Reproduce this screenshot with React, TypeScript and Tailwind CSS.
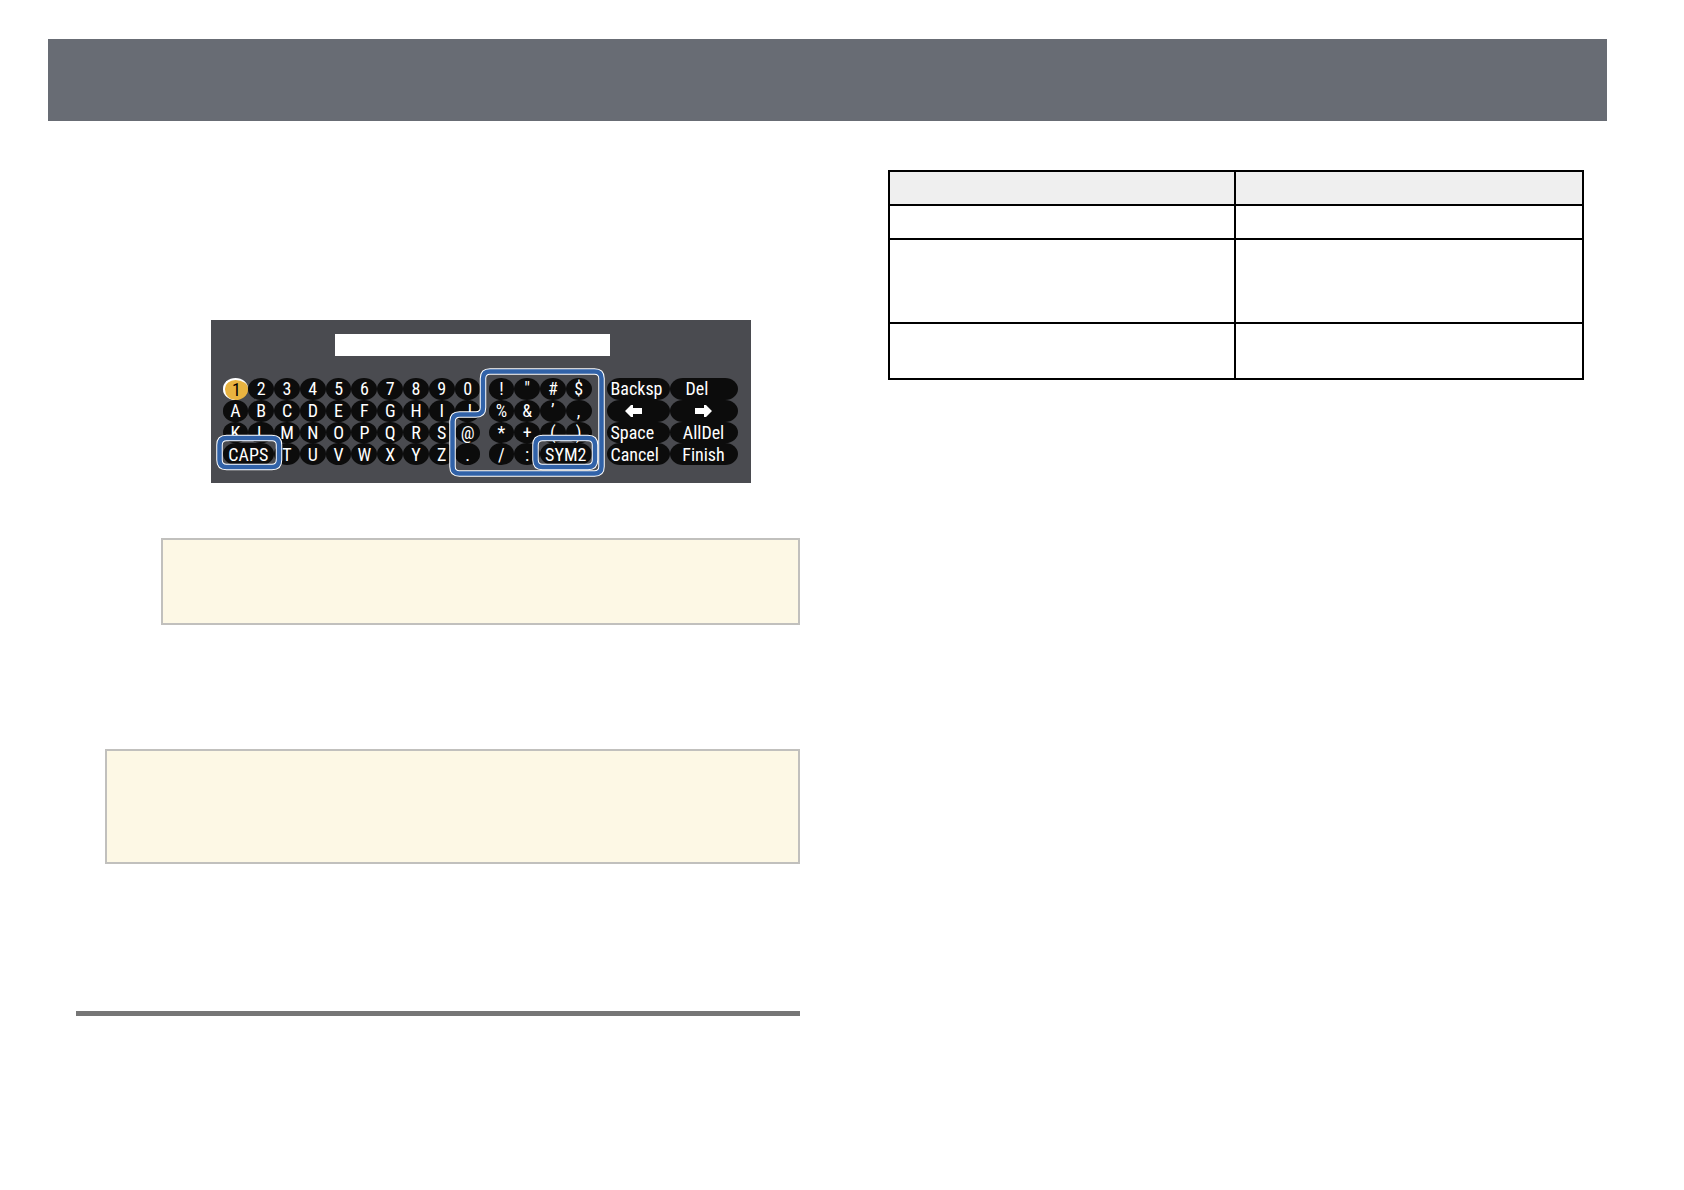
import { useState } from 'react'
import clsx from 'clsx'

type Key = {
  id: string
  label?: string
  span?: boolean
  className?: string
}

const letterKeys: Key[] = [
  ...'1234567890ABCDEFGHIJKLMNOPQRS@'.split('').map((c) => ({ id: c, label: c })),
  { id: 'caps', label: 'CAPS', span: true },
  ...'TUVWXYZ.'.split('').map((c) => ({ id: c, label: c })),
]

const symbolKeys: Key[] = [
  ...'!"#$%&\u2019,*+()/:'.split('').map((c) => ({ id: c, label: c })),
  { id: 'sym2', label: 'SYM2', span: true },
]

const commandKeys: Key[] = [
  { id: 'backspace', label: 'Backsp', className: 'justify-start pl-1' },
  { id: 'delete', label: 'Del', className: 'justify-start pl-4' },
  { id: 'left', className: 'justify-start pl-[18px]' },
  { id: 'right', className: 'justify-center' },
  { id: 'space', label: 'Space', className: 'justify-start pl-1' },
  { id: 'delete-all', label: 'AllDel', className: 'justify-center' },
  { id: 'cancel', label: 'Cancel', className: 'justify-start pl-1' },
  { id: 'finish', label: 'Finish', className: 'justify-center' },
]

const outlines = [
  'M279 51.5H383.5Q390.5 51.5 390.5 58.5V146.5Q390.5 153.5 383.5 153.5H248.5Q241.5 153.5 241.5 146.5V101.5Q241.5 94.5 248.5 94.5H265Q272 94.5 272 87.5V58.5Q272 51.5 279 51.5Z',
  'M15.5 118H61Q68 118 68 125V140Q68 147 61 147H15.5Q8.5 147 8.5 140V125Q8.5 118 15.5 118Z',
  'M331.5 118H377Q384 118 384 125V140Q384 147 377 147H331.5Q324.5 147 324.5 140V125Q324.5 118 331.5 118Z',
]

const Arrow = ({ flip }: { flip?: boolean }) => (
  <svg width="17" height="12" viewBox="0 0 17 12" fill="#fff" className={clsx(flip && 'rotate-180')}>
    <path d="M0 6L6 0H8V3H17V9H8V12H6Z" />
  </svg>
)

function SoftKeyboard() {
  const [selected, setSelected] = useState('1')
  const [text, setText] = useState('')

  const renderKey = (key: Key) => (
    <button
      key={key.id}
      type="button"
      aria-label={key.label ?? key.id}
      onClick={() => setSelected(key.id)}
      className={clsx(
        'flex min-w-0 items-center whitespace-nowrap rounded-[13px/11px] pt-px',
        key.span && 'col-span-2',
        key.className ?? 'justify-center',
        selected === key.id
          ? 'border-l-2 border-t-2 border-white bg-[#e9b340] text-black'
          : 'bg-[#0c0c0c] text-white'
      )}
    >
      {key.label ?? <Arrow flip={key.id === 'right'} />}
    </button>
  )

  return (
    <div className="relative mx-auto w-[540px] bg-[#4a4b50] pb-[18px] pl-3 pt-3.5">
      <input
        aria-label="Text"
        value={text}
        onChange={(e) => setText(e.target.value)}
        className="ml-28 block h-[22px] w-[275px] bg-white px-1 text-sm outline-none"
      />
      <div className="mt-[22px] flex h-[87px] font-['Roboto_Condensed','Liberation_Sans_Narrow',sans-serif] text-[18px] leading-5">
        <div className="grid w-[258px] grid-cols-10 grid-rows-4">{letterKeys.map(renderKey)}</div>
        <div className="ml-2 grid w-[103px] grid-cols-4 grid-rows-4">{symbolKeys.map(renderKey)}</div>
        <div className="ml-[15px] grid grid-cols-[63px_68px] grid-rows-4">{commandKeys.map(renderKey)}</div>
      </div>
      {/* Highlighted key groups */}
      <svg className="pointer-events-none absolute inset-0" width="540" height="163" viewBox="0 0 540 163" fill="none">
        {outlines.map((d) => (
          <g key={d}>
            <path d={d} stroke="#fff" strokeWidth="6.5" />
            <path d={d} stroke="#3162a8" strokeWidth="4.5" />
          </g>
        ))}
      </svg>
    </div>
  )
}

export default function App() {
  const rows = ['h-[34px]', 'h-[84px]', 'h-14']

  return (
    <div className="min-h-screen bg-white pb-12 pl-12 pr-[77px] pt-[39px] font-['Liberation_Sans',sans-serif]">
      <header className="h-[82px] bg-[#686c74]" />

      <main className="grid grid-cols-[724fr_696fr] gap-[88px] pl-7 pr-[23px] pt-[49px]">
        <section>
          <div className="pl-[85px] pt-[150px]">
            <SoftKeyboard />
            <div className="mt-[55px] min-h-[87px] border-2 border-[#c1c0bd] bg-[#fdf8e5]" />
          </div>
          <div className="ml-[29px] mt-[124px] min-h-[115px] border-2 border-[#c1c0bd] bg-[#fdf8e5]" />
          <hr className="mt-[147px] border-0 border-t-[5px] border-[#767676]" />
        </section>

        {/* Settings table */}
        <section>
          <table className="w-full table-fixed border-collapse">
            <colgroup>
              <col className="w-[346px]" />
              <col />
            </colgroup>
            <thead>
              <tr className="h-[34px] bg-[#efefef]">
                <th className="border-2 border-black" />
                <th className="border-2 border-black" />
              </tr>
            </thead>
            <tbody>
              {rows.map((height) => (
                <tr key={height} className={height}>
                  <td className="border-2 border-black" />
                  <td className="border-2 border-black" />
                </tr>
              ))}
            </tbody>
          </table>
        </section>
      </main>
    </div>
  )
}
